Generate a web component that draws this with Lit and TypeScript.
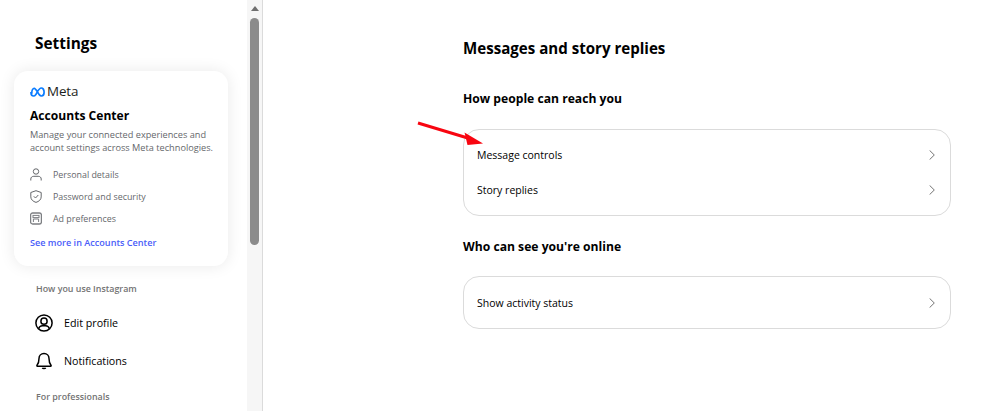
import { LitElement, html, css } from "lit";
import { customElement } from "lit/decorators.js";

const chevron = html`<svg class="chev" viewBox="0 0 6 10" width="6" height="10"><path d="M.6.4L5.300 5 .6 9.600" fill="none" stroke="#737373" stroke-width="1"/></svg>`;

@customElement("app-root")
export class AppRoot extends LitElement {
  static styles = css`
    :host { display: block; width: 983px; height: 411px; overflow: hidden; background: #fff; font-family: "Open Sans", "Noto Sans", sans-serif; color: #000; position: relative; }
    * { box-sizing: border-box; }
    .page { display: flex; height: 411px; }
    .side { width: 263px; flex: none; display: flex; border-right: 1px solid #dbdbdb; height: 411px; overflow: hidden; }
    .col { width: 247px; flex: none; display: flex; flex-direction: column; padding: 34px 0 0 14px; }
    .bar { width: 15px; flex: none; background: #f6f6f6; display: flex; flex-direction: column; align-items: center; padding-top: 6px; }
    .up { width: 0; height: 0; border-left: 4px solid transparent; border-right: 4px solid transparent; border-bottom: 5px solid #6f6f6f; }
    .thumb { width: 9px; height: 227px; margin-top: 7px; border-radius: 5px; background: #8b8b8b; }
    .settings { font-size: 15.4px; font-weight: 700; line-height: 20px; padding-left: 21px; margin-bottom: 17px; }
    .card { width: 214px; height: 195px; border-radius: 14px; background: #fff; box-shadow: 0 0 16px rgba(0,0,0,.09); padding: 13px 16px 0; display: flex; flex-direction: column; }
    .meta { display: flex; align-items: center; gap: 2px; height: 15px; font-size: 13.4px; letter-spacing: -.1px; color: #1c1e21; line-height: 15px; }
    .ac { font-size: 12.1px; font-weight: 700; margin-top: 8px; line-height: 17px; }
    .desc { font-size: 9.2px; color: #65676b; line-height: 13px; margin-top: 4px; white-space: nowrap; }
    .links { display: flex; flex-direction: column; margin-top: 9px; }
    .link { display: flex; align-items: center; gap: 11px; height: 22px; font-size: 8.9px; color: #65676b; }
    .link svg { flex: none; }
    .more { font-size: 9.1px; font-weight: 600; color: #4a5df9; margin-top: 7px; line-height: 14px; }
    .sec { font-size: 8.9px; font-weight: 600; color: #737373; padding-left: 22px; line-height: 14px; margin-top: 16px; }
    .sec.flush { margin-top: 0; }
    .nav { display: flex; align-items: center; gap: 11px; padding-left: 21px; height: 38px; font-size: 10.7px; }
    .navs { display: flex; flex-direction: column; margin-top: 8px; margin-bottom: 10px; }
    .main { flex: 1; padding: 38px 0 0 200px; display: flex; flex-direction: column; }
    h1 { font-size: 15.1px; font-weight: 700; line-height: 20px; margin: 0; }
    h2 { font-size: 12.15px; font-weight: 700; line-height: 18px; margin: 0; }
    .h1 { margin-bottom: 32px; }
    .box { width: 488px; border: 1px solid #dbdbdb; border-radius: 16px; display: flex; flex-direction: column; padding: 7px 0 8px; margin-top: 21px; margin-bottom: 22px; }
    .box.one { margin-top: 20px; padding: 8px 0; }
    .row { display: flex; align-items: center; justify-content: space-between; height: 35px; padding: 0 15px 0 13px; font-size: 10.5px; }
    .arrow { position: absolute; left: 417px; top: 120px; }
  `;

  render() {
    return html`
      <div class="page">
        <div class="side">
          <div class="col">
            <div class="settings">Settings</div>
            <div class="card">
              <div class="meta">
                <svg width="15" height="10" viewBox="0 0 15 10"><path d="M1.800 5.800C1.800 3.300 2.900 1.400 4.200 1.400c1.700 0 3.800 4.700 5 6.200.8 1 1.500 1.400 2.300 1.400 1.600 0 2.600-1.400 2.600-3.700 0-2.500-1.200-4.300-2.900-4.300-2.300 0-3.800 4.400-5.300 6.400-.8 1.100-1.500 1.600-2.400 1.600C2.300 9 1 7.700 1 5.800z" fill="none" stroke="#0a7cff" stroke-width="1.700"/></svg>
                <span>Meta</span>
              </div>
              <div class="ac">Accounts Center</div>
              <div class="desc">Manage your connected experiences and<br>account settings across Meta technologies.</div>
              <div class="links">
                <div class="link">
                  <svg width="12" height="13" viewBox="0 0 12 13" fill="none" stroke="#65676b" stroke-width="1"><circle cx="6" cy="3.500" r="2.700"/><path d="M.8 12.500V11c0-1.700 1.300-2.700 3-2.700h4.400c1.700 0 3 1 3 2.700v1.500"/></svg>
                  <span>Personal details</span>
                </div>
                <div class="link">
                  <svg width="12" height="13" viewBox="0 0 12 13" fill="none" stroke="#65676b" stroke-width="1"><path d="M6 .7l5.200 1.800v4.400c0 2.700-2.300 4.600-5.200 5.500C3.100 11.500.8 9.600.8 6.900V2.500z"/><path d="M3.800 6.300l1.700 1.700 2.800-3"/></svg>
                  <span>Password and security</span>
                </div>
                <div class="link">
                  <svg width="12" height="13" viewBox="0 0 12 13" fill="none" stroke="#7d7f83"><rect x=".6" y="1" width="10.800" height="11" rx="2" stroke-width="1.300"/><rect x="3" y="3.400" width="6" height="2.200" stroke-width="1"/><path d="M3.400 10V7h5.200v3" stroke-width="1"/></svg>
                  <span>Ad preferences</span>
                </div>
              </div>
              <div class="more">See more in Accounts Center</div>
            </div>
            <div class="sec">How you use Instagram</div>
            <div class="navs">
              <div class="nav">
                <svg width="18" height="18" viewBox="0 0 18 18" fill="none" stroke="#000" stroke-width="1.500"><circle cx="9" cy="9" r="8.100"/><circle cx="9" cy="7.200" r="3.100"/><path d="M3.600 14.800c.6-2 2-3 3.800-3h3.200c1.800 0 3.200 1 3.800 3"/></svg>
                <span>Edit profile</span>
              </div>
              <div class="nav">
                <svg width="18" height="18" viewBox="0 0 18 18" fill="none" stroke="#000" stroke-width="1.500"><path d="M9 1.500c-3 0-5 2.200-5 5 0 3.500-.5 5-2 6.800-.3.400-.1.900.4.900h13.200c.5 0 .7-.5.4-.9-1.500-1.800-2-3.300-2-6.800 0-2.800-2-5-5-5z"/><path d="M7.300 15.800c.6 1 2.800 1 3.400 0"/></svg>
                <span>Notifications</span>
              </div>
            </div>
            <div class="sec flush">For professionals</div>
          </div>
          <div class="bar"><div class="up"></div><div class="thumb"></div></div>
        </div>
        <div class="main">
          <h1 class="h1">Messages and story replies</h1>
          <h2>How people can reach you</h2>
          <div class="box">
            <div class="row"><span>Message controls</span>${chevron}</div>
            <div class="row"><span>Story replies</span>${chevron}</div>
          </div>
          <h2>Who can see you're online</h2>
          <div class="box one">
            <div class="row"><span>Show activity status</span>${chevron}</div>
          </div>
        </div>
      </div>
      <svg class="arrow" width="70" height="30" viewBox="0 0 70 30">
        <path d="M1 3L54 19" stroke="#f80510" stroke-width="3" fill="none"/>
        <path d="M66 23.500L47.500 12.500 50.500 25z" fill="#f80510"/>
      </svg>
    `;
  }
}
